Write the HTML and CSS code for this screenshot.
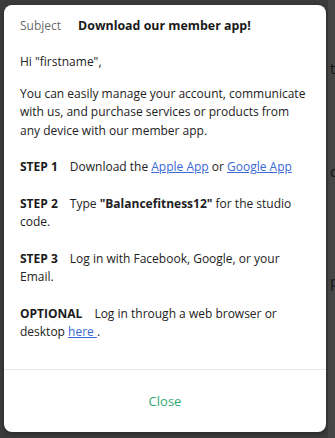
FILE: index.html
```html
<!DOCTYPE html>
<html lang="en">
<head>
    <meta charset="UTF-8">
    <meta name="viewport" content="width=device-width, initial-scale=1.0">
    <title>Download our member app!</title>
    <link rel="stylesheet" href="styles.css">
</head>
<body>
    <!-- page underneath the dimmed overlay, only its edge shows -->
    <div class="page-behind">
        <span class="behind-t">t</span>
        <span class="behind-d">d</span>
        <span class="behind-p">p</span>
    </div>

    <div class="backdrop">
        <div class="modal">
            <div class="modal-body">
                <div class="subject">
                    <span class="subject-label">Subject</span>
                    <span class="subject-text">Download our member app!</span>
                </div>

                <p class="greeting">Hi "firstname",</p>

                <p>You can easily manage your account, communicate with us, and purchase services or products from any device with our member app.</p>

                <p class="step"><strong class="step-label">STEP 1</strong>Download the <a href="#">Apple App</a> or <a href="#">Google App</a></p>

                <p class="step"><strong class="step-label">STEP 2</strong>Type <strong>"Balancefitness12"</strong> for the studio code.</p>

                <p class="step"><strong class="step-label">STEP 3</strong>Log in with Facebook, Google, or your Email.</p>

                <p class="step"><strong class="step-label">OPTIONAL</strong>Log in through a web browser or desktop <a href="#">here </a>.</p>
            </div>

            <div class="modal-footer">
                <button class="close-btn">Close</button>
            </div>
        </div>
    </div>
</body>
</html>
```

FILE: styles.css
```css
body {
    margin: 0;
    font-family: "Open Sans", Arial, sans-serif;
    background-color: #3b3b3b;
    position: relative;
    overflow: hidden;
}
.page-behind {
    position: absolute;
    top: 0;
    right: 0;
    width: 7px;
    height: 438px;
    background-color: #464646;
    font-size: 15px;
    color: #151515;
}
.page-behind span {
    position: absolute;
    left: 2px;
}
.behind-t { top: 58px; }
.behind-d { top: 161px; }
.behind-p { top: 271px; }
.backdrop {
    position: relative;
    height: 438px;
    padding: 5px 9px 0 4px;
    box-sizing: border-box;
}
.modal {
    background-color: white;
    border-radius: 8px;
    height: 427px;
    display: flex;
    flex-direction: column;
    box-shadow: 0 1px 4px rgba(0, 0, 0, 0.4);
}
.modal-body {
    padding: 12px 16px 0 16px;
    flex: 1;
    color: #222;
    font-size: 12px;
    line-height: 18.5px;
}
.subject {
    display: flex;
    gap: 17px;
    margin-bottom: 17px;
}
.subject-label {
    color: #6b6b6b;
}
.subject-text {
    font-weight: bold;
    font-size: 12.4px;
    color: #1a1a1a;
}
p {
    margin: 0 0 13.5px 0;
}
.step {
    margin-top: 18px;
}
.step-label {
    margin-right: 12px;
    color: #1a1a1a;
}
a {
    color: #3869d4;
}
.modal-footer {
    flex-shrink: 0;
    border-top: 1px solid #e6e6e6;
    height: 62px;
    display: flex;
    align-items: center;
    justify-content: center;
}
.close-btn {
    background: none;
    border: none;
    font-family: "Open Sans", Arial, sans-serif;
    font-size: 13px;
    color: #34a872;
    cursor: pointer;
    padding: 0;
}
```
